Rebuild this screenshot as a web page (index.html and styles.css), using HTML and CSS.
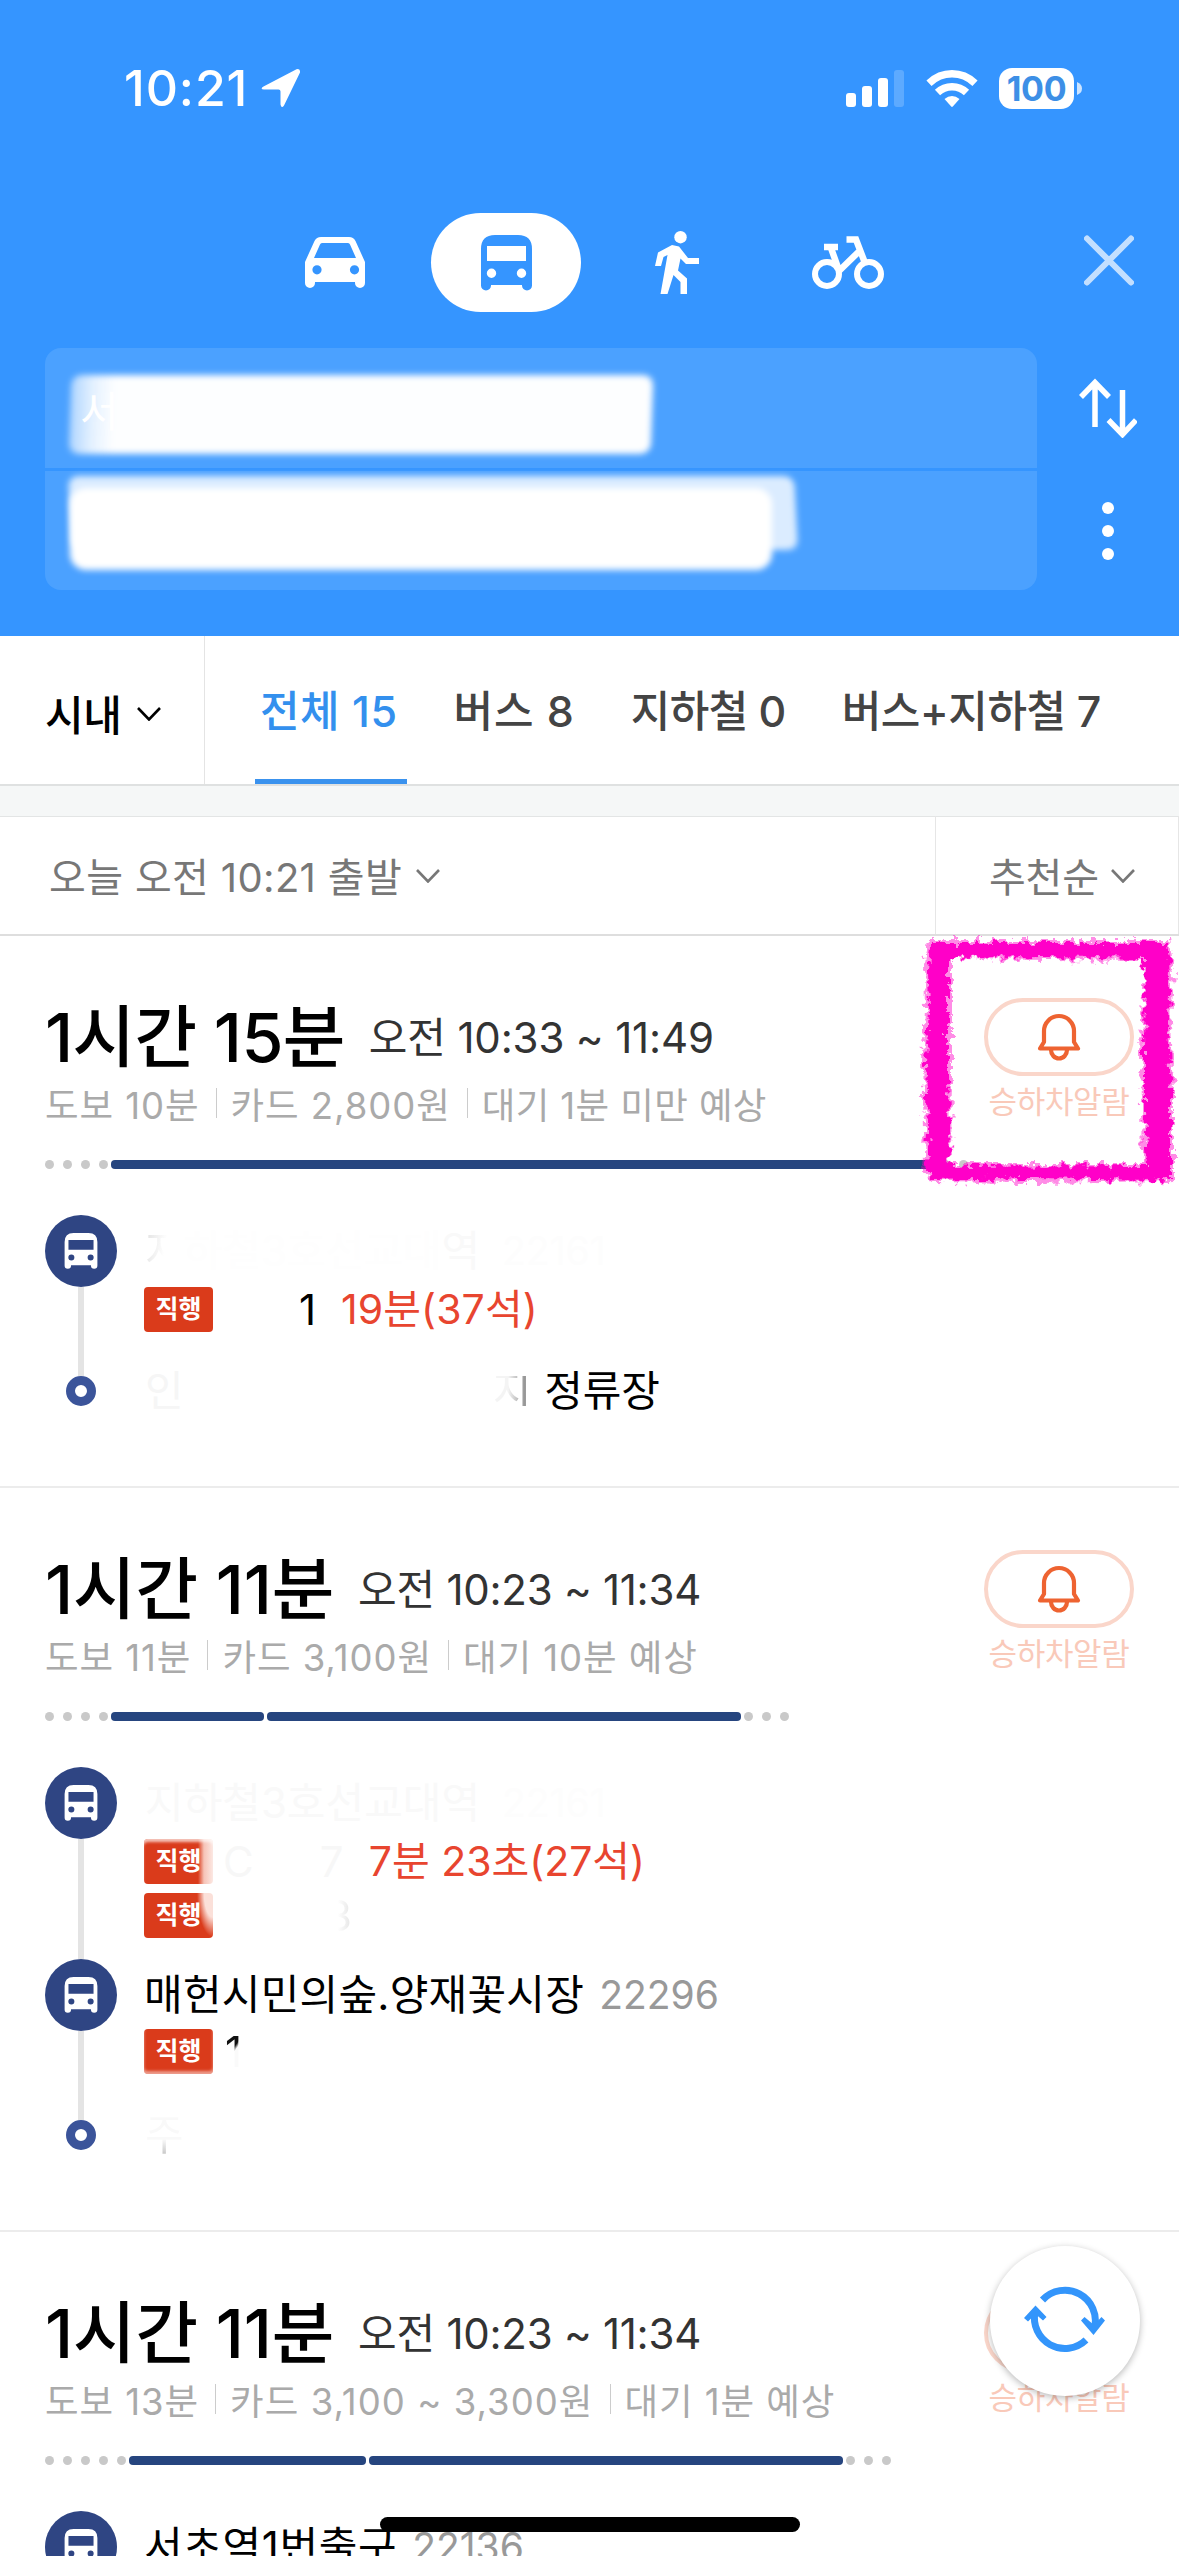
FILE: index.html
```
<!DOCTYPE html>
<html lang="ko">
<head>
<meta charset="utf-8">
<title>길찾기</title>
<link rel="stylesheet" href="styles.css">
</head>
<body>
<svg class="defs" width="0" height="0" aria-hidden="true">
  <symbol id="bus" viewBox="0 0 51 56">
    <path fill="currentColor" fill-rule="evenodd" d="M0 50V14Q0 0 14 0H37Q51 0 51 14V50.500a5 5 0 0 1-10 0V50H10v.500a5 5 0 0 1-10 0zM6 11V26H45V11zM10.500 33.500a4.700 4.700 0 1 0 0 9.400a4.700 4.700 0 1 0 0-9.400zM40.500 33.500a4.700 4.700 0 1 0 0 9.400a4.700 4.700 0 1 0 0-9.400z"/>
  </symbol>
  <symbol id="bell" viewBox="0 0 44 49">
    <path fill="none" stroke="currentColor" stroke-width="4.200" stroke-linejoin="round" stroke-linecap="round" d="M7 29V18a15 15 0 0 1 30 0V29L41 35.500H3ZM14 37a8 8.500 0 0 0 16 0"/>
  </symbol>
  <symbol id="chev" viewBox="0 0 24 14">
    <path fill="none" stroke="currentColor" stroke-width="2.600" d="M1 1L12 12.500L23 1"/>
  </symbol>
</svg>

<header class="header">
  <div class="status">
    <span class="clock">10:21</span>
    <svg class="loc" width="40" height="40" viewBox="0 0 40 40"><path fill="#fff" d="M2.500 18.500L35.500 1.200Q39.500 0 39 4.500L23 37.500Q20.500 41 19.500 36.500V23.500Q19.500 21.500 17.500 21.500H3Q-1.500 21 2.500 18.500z"/></svg>
    <svg class="signal" width="58" height="38" viewBox="0 0 58 38"><g fill="#fff"><rect y="23" width="10" height="14" rx="3"/><rect x="16" y="16" width="10" height="21" rx="3"/><rect x="32" y="8" width="10" height="29" rx="3"/><rect x="48" y="0" width="10" height="37" rx="3" opacity=".2"/></g></svg>
    <svg class="wifi" width="52" height="38" viewBox="0 0 52 38"><g fill="none" stroke="#fff" stroke-width="7.500"><path d="M3 13.200Q13 3.800 26 3.800T49 13.200"/><path d="M11.500 22.500Q17.500 16.700 26 16.700T40.500 22.500"/></g><path fill="#fff" d="M18.500 29Q22 26 26 26T33.500 29L26.800 36.600Q26 37.300 25.200 36.600z"/></svg>
    <span class="battery">100</span>
    <svg class="nub" width="5" height="13" viewBox="0 0 5 13"><path fill="#fff" opacity=".75" d="M0 0Q5 2 5 6.500T0 13z"/></svg>
  </div>

  <nav class="modes">
    <span class="mode"><svg width="60" height="51" viewBox="0 0 60 51"><path fill="#fff" fill-rule="evenodd" d="M0 46V25L9.500 4Q11.500 0 16 0H44Q48.500 0 50.500 4L60 25V46a5 5 0 0 1-10 0V45H10v1a5 5 0 0 1-10 0zM9 21H51L45 7.500Q44.500 6 43 6H17Q15.500 6 15 7.500zM12 28.200a4.600 4.600 0 1 0 0 9.200a4.600 4.600 0 1 0 0-9.200zM49.500 28.200a4.600 4.600 0 1 0 0 9.200a4.600 4.600 0 1 0 0-9.200z"/></svg></span>
    <span class="mode mode-on"><svg width="51" height="56"><use href="#bus"/></svg></span>
    <span class="mode"><svg width="44" height="64" viewBox="0 0 44 64"><circle cx="25.500" cy="6.200" r="6.200" fill="#fff"/><path fill="#fff" d="M17 14L24 15.500L33 27H44V33H31L25.500 27.500L23 39.500L32 47.500V63H25.500V51L18.500 44L12.500 63H5.500L12.500 24L8.500 26L6 35H0L3 21.500z"/></svg></span>
    <span class="mode"><svg width="72" height="54" viewBox="0 0 72 54"><g fill="none" stroke="#fff"><circle cx="15" cy="38" r="12" stroke-width="6"/><circle cx="57" cy="38" r="12" stroke-width="6"/><path stroke-width="6.500" d="M12 11H26M19 12L26.500 33M34.500 3.500H44L53 27M27 35L48.500 14"/></g></svg></span>
    <svg class="close" width="50" height="51" viewBox="0 0 50 51"><path stroke="#fff" stroke-width="6" stroke-linecap="round" opacity=".7" d="M3 3.500L47 47.500M47 3.500L3 47.500"/></svg>
  </nav>

  <div class="route">
    <div class="fields">
      <div class="field"><span class="smear smear-a"></span><span class="origin">서</span></div>
      <div class="field"><span class="smear smear-b"></span><span class="smear smear-c"></span></div>
    </div>
    <div class="side">
      <svg width="58" height="60" viewBox="0 0 58 60"><path fill="none" stroke="#fff" stroke-width="5.500" d="M16 49V4M2 19L16 4.500L30 19M43.500 12V57M29.500 42L43.500 56.500L57 42"/></svg>
      <span class="dots"><i></i><i></i><i></i></span>
    </div>
  </div>
</header>

<div class="tabs">
  <div class="scope"><span>시내</span><svg width="24" height="14"><use href="#chev"/></svg></div>
  <nav class="tablist">
    <span class="tab tab-on">전체 15</span><span class="tab tab-bus">버스 8</span><span class="tab tab-sub">지하철 0</span><span class="tab tab-mix">버스+지하철 7</span>
  </nav>
</div>

<div class="filter">
  <div class="depart"><span>오늘 오전 10:21 출발</span><svg width="24" height="14"><use href="#chev"/></svg></div>
  <div class="sort"><span>추천순</span><svg width="24" height="14"><use href="#chev"/></svg></div>
</div>

<main>
  <article class="card">
    <div class="top">
      <div class="summary">
        <div class="line1"><h2>1시간 15분</h2><span class="time time-a">오전 10:33 ~ 11:49</span></div>
        <div class="meta"><span>도보 10분</span><span>카드 2,800원</span><span class="wait-a">대기 1분 미만 예상</span></div>
      </div>
      <div class="alarm"><span class="pill"><svg width="44" height="49"><use href="#bell"/></svg></span><span class="alabel">승하차알람</span></div>
    </div>
    <div class="bar"><i></i><i></i><i></i><i></i><b style="width:827px"></b><i></i><i></i></div>
    <div class="stops">
      <div class="stop">
        <div class="rail"><span class="busdot"><svg width="34" height="36"><use href="#bus"/></svg></span><span class="track"></span></div>
        <div class="info">
          <div class="name ghost"><span class="ghost-ji">지</span><span class="ghost-x">하철3호선교대</span><span class="ghost-y">역</span><span class="ghost-x code">22161</span></div>
          <div class="busrow"><span class="badge">직행</span><span class="num">1</span><span class="eta">19분(37석)</span></div>
        </div>
      </div>
      <div class="stop">
        <div class="rail"><span class="enddot"></span></div>
        <div class="info"><div class="name end"><span class="ghost-in">인</span><span class="ghost-end">지</span><span class="place">정류장</span></div></div>
      </div>
    </div>
  </article>

  <article class="card">
    <div class="top">
      <div class="summary">
        <div class="line1"><h2 class="dur-b">1시간 11분</h2><span class="time">오전 10:23 ~ 11:34</span></div>
        <div class="meta"><span>도보 11분</span><span>카드 3,100원</span><span>대기 10분 예상</span></div>
      </div>
      <div class="alarm"><span class="pill"><svg width="44" height="49"><use href="#bell"/></svg></span><span class="alabel">승하차알람</span></div>
    </div>
    <div class="bar"><i></i><i></i><i></i><i></i><b style="width:153px"></b><b style="width:474px"></b><i></i><i></i><i></i></div>
    <div class="stops">
      <div class="stop">
        <div class="rail"><span class="busdot"><svg width="34" height="36"><use href="#bus"/></svg></span><span class="track"></span></div>
        <div class="info info-two">
          <div class="name ghost"><span class="ghost-y">지하철3호선교대역</span><span class="ghost-x code">22161</span></div>
          <div class="busrow"><span class="badge fade-tr">직행</span><span class="ghost-g">C</span><span class="ghost-7">7</span><span class="eta eta-b">7분 23초(27석)</span></div>
          <div class="busrow"><span class="badge fade-r">직행</span><span class="ghost-8">3</span></div>
        </div>
      </div>
      <div class="stop">
        <div class="rail"><span class="busdot"><svg width="34" height="36"><use href="#bus"/></svg></span><span class="track"></span></div>
        <div class="info">
          <div class="name"><span class="place-b">매헌시민의숲.양재꽃시장</span><span class="code">22296</span></div>
          <div class="busrow busrow-up"><span class="badge fade-b">직행</span><span class="ghost-1">1</span></div>
        </div>
      </div>
      <div class="stop">
        <div class="rail"><span class="enddot"></span></div>
        <div class="info"><div class="name end"><span class="ghost-ju">주</span></div></div>
      </div>
    </div>
  </article>

  <article class="card">
    <div class="top">
      <div class="summary">
        <div class="line1"><h2 class="dur-b">1시간 11분</h2><span class="time">오전 10:23 ~ 11:34</span></div>
        <div class="meta"><span>도보 13분</span><span class="fare">카드 3,100 ~ 3,300원</span><span>대기 1분 예상</span></div>
      </div>
      <div class="alarm"><span class="pill"><svg width="44" height="49"><use href="#bell"/></svg></span><span class="alabel">승하차알람</span></div>
    </div>
    <div class="bar"><i></i><i></i><i></i><i></i><i></i><b style="width:237px"></b><b style="width:474px"></b><i></i><i></i><i></i></div>
    <div class="stops">
      <div class="stop">
        <div class="rail"><span class="busdot"><svg width="34" height="36"><use href="#bus"/></svg></span></div>
        <div class="info"><div class="name"><span class="place-c">서초역1번출구</span><span class="code">22136</span></div></div>
      </div>
    </div>
  </article>
</main>

<svg class="marker" width="270" height="260" viewBox="0 0 270 260">
  <filter id="rough" x="-5%" y="-5%" width="110%" height="110%"><feTurbulence type="fractalNoise" baseFrequency=".13" numOctaves="3" seed="7"/><feDisplacementMap in="SourceGraphic" scale="15" xChannelSelector="R" yChannelSelector="G"/><feGaussianBlur stdDeviation=".7"/></filter>
  <g filter="url(#rough)" fill="#ff00c8" fill-rule="evenodd">
    <path opacity=".45" d="M13 9H255L260 40L257 90L260 160V250L120 252L20 251L8 242L10 200L8 130L11 80L10 30zM38 28V142L37 232H229L227 120L230 30z"/>
    <path d="M16 12H253L256 40L254 90L257 160V247L240 249L120 247L20 249L12 240L14 200L12 130L15 80L14 40zM34 27V142L36 235L233 234L230 180V120L231 28L130 26z"/>
  </g>
</svg>

<button class="refresh" aria-label="새로고침"><svg width="82" height="72" viewBox="0 0 82 72"><g fill="none" stroke="#3395fb" stroke-width="7"><path d="M18.500 15A30.500 30.500 0 0 1 70.500 43"/><path d="M62 55A30.500 30.500 0 0 1 11 27"/></g><path fill="#3395fb" d="M0 33L11.500 20.500L22.500 32L19 35.500L11.500 29L4 36.500zM57 35.500L60.500 32L70 40L77.500 32L81 35.500L69.500 50z"/></svg></button>
<div class="home"></div>
</body>
</html>
```
FILE: styles.css
```
* { box-sizing: border-box; margin: 0; padding: 0; }
html, body { width: 1179px; height: 2556px; overflow: hidden; }
body { position: relative; display: flex; flex-direction: column; background: #fff; color: #000; font-family: Inter, "Noto Sans CJK KR", sans-serif; font-size: 42px; font-weight: 400; white-space: nowrap; }
svg { display: block; flex: none; }
i { font-style: normal; }
main { flex: 1; min-height: 0; overflow: hidden; }
.defs { position: absolute; }

.header { flex: none; height: 636px; padding-top: 67px; background: #3595ff; }
.status { display: flex; align-items: center; height: 42px; padding-left: 124px; color: #fff; }
.clock { width: 137px; font-size: 50px; font-weight: 500; line-height: 42px; letter-spacing: .9px; }
.signal { margin: 2px 22px 0 545px; }
.wifi { margin-top: 2px; }
.battery { width: 75px; height: 41px; margin-left: 21px; border-radius: 13px; background: #fff; color: #3d8fe6; font-size: 34px; font-weight: 700; line-height: 41px; text-align: center; letter-spacing: -.3px; }
.nub { margin-left: 3px; }

.modes { display: flex; align-items: center; height: 99px; margin-top: 104px; padding: 0 45px 0 260px; gap: 21px; }
.mode { display: flex; align-items: center; justify-content: center; width: 150px; height: 99px; }
.mode-on { border-radius: 50px; background: #fff; color: #3595ff; }
.close { margin: -4px 0 0 auto; }

.route { display: flex; height: 242px; margin-top: 36px; padding-left: 45px; }
.fields { display: flex; flex-direction: column; gap: 3px; width: 993px; border-radius: 16px; overflow: hidden; }
.field { display: grid; flex: 1; align-items: start; justify-items: start; padding-left: 25px; background: #4ba1ff; }
.smear { grid-area: 1 / 1; background: #fff; filter: blur(3px); border-radius: 10px; }
.smear-a { width: 582px; height: 79px; margin-top: 27px; transform: skewX(-2deg); background: linear-gradient(to right, rgba(255,255,255,.55), rgba(255,255,255,.85) 22px, #fdfeff 44px); }
.origin { grid-area: 1 / 1; margin: 24px 0 0 10px; color: #fff; line-height: 79px; z-index: 1; }
.smear-b { width: 726px; height: 74px; margin-top: 5px; background: rgba(255,255,255,.8); transform: skewX(3deg); }
.smear-c { width: 702px; height: 82px; margin-top: 17px; border-radius: 16px; }
.side { display: flex; flex-direction: column; align-items: center; width: 142px; padding-top: 30px; }
.dots { display: flex; flex-direction: column; gap: 11px; margin-top: 64px; }
.dots i { width: 12px; height: 12px; border-radius: 50%; background: #fff; }

.tabs { display: flex; flex: none; height: 150px; border-bottom: 2px solid #dfe1e1; }
.scope { display: flex; align-items: center; width: 205px; padding: 4px 0 0 45px; border-right: 1px solid #e4e4e4; font-weight: 500; letter-spacing: -.5px; }
.scope svg { margin: 3px 0 0 16px; }
.tablist { display: flex; gap: 56px; padding-left: 55px; }
.tab { position: relative; color: #444; font-size: 43px; font-weight: 500; line-height: 150px; }
.tab-on { color: #3390ee; letter-spacing: .5px; }
.tab-on::after { content: ""; position: absolute; left: -5px; right: -9px; bottom: 0; height: 5px; background: #3a92ee; }
.tab-bus { letter-spacing: .9px; }
.tab-sub { letter-spacing: -.6px; }
.tab-mix { letter-spacing: -.4px; }

.filter { display: flex; flex: none; justify-content: space-between; height: 150px; border-top: 30px solid #f5f7f7; border-bottom: 2px solid #dedede; color: #777; font-size: 40px; box-shadow: inset 0 1px #e3e5e5; }
.depart, .sort { display: flex; align-items: center; }
.depart { padding-left: 49px; letter-spacing: .35px; }
.depart svg { margin: 2px 0 0 14px; }
.sort { width: 244px; padding-left: 53px; border: 1px solid #e6e6e6; border-width: 0 1px; letter-spacing: -.2px; }
.sort svg { margin: 2px 0 0 12px; }

.card { padding: 62px 45px 80px; border-bottom: 2px solid #ececec; }
.top { display: flex; justify-content: space-between; height: 133px; }
.line1 { display: flex; align-items: center; height: 80px; }
h2 { font-size: 68px; font-weight: 500; line-height: 80px; letter-spacing: -.65px; margin-top: -2px; }
.dur-b { margin-right: -4px; letter-spacing: -.2px; }
.time { margin: -8px 0 0 28px; color: #333; letter-spacing: -.26px; }
.time-a { margin-left: 24px; letter-spacing: -.15px; }
.meta { display: flex; align-items: center; height: 50px; margin-top: 0; color: #aaa; font-size: 36.500px; letter-spacing: .95px; }
.meta span + span { display: flex; align-items: center; }
.meta span + span::before { content: ""; width: 1px; height: 30px; margin: 0 14px 0 16px; background: #ccc; }
.meta .wait-a { letter-spacing: .4px; }
.meta .fare { letter-spacing: 1.05px; }
.alarm { display: flex; flex-direction: column; align-items: center; width: 150px; }
.pill { display: flex; align-items: center; justify-content: center; width: 150px; height: 78px; border: 4px solid #fad6ca; border-radius: 39px; color: #ee6331; }
.alabel { margin-top: 6px; color: #f9c9b9; font-size: 31px; line-height: 40px; letter-spacing: -.3px; }

.bar { display: flex; align-items: center; gap: 3px; height: 9px; margin-top: 29px; }
.bar i { width: 9px; height: 9px; border-radius: 50%; background: #c9c9c9; }
.bar i + i { margin-left: 6px; }
.bar b { height: 9px; border-radius: 4px; background: #26457f; }

.stops { margin-top: 46px; }
.stop { display: flex; gap: 28px; }
.rail { display: flex; flex-direction: column; align-items: center; width: 72px; }
.busdot { display: flex; align-items: center; justify-content: center; flex: none; width: 72px; height: 72px; border-radius: 50%; background: #2f4583; color: #fff; }
.track { flex: 1; width: 6px; background: #e4e4e4; }
.enddot { width: 30px; height: 30px; border: 9px solid #3b549a; border-radius: 50%; background: #fff; }
.info { min-height: 161px; }
.info-two { min-height: 192px; }
.name { display: flex; align-items: center; height: 72px; line-height: 72px; }
.end { height: 30px; line-height: 30px; }
.rail:has(.enddot) + .info { min-height: 30px; }
.place { margin-left: 13px; letter-spacing: -.2px; }
.place-b { margin-left: -1px; letter-spacing: .25px; }
.place-c { margin-left: -1px; letter-spacing: .6px; }
.code { margin-left: 15px; color: #999; font-size: 39px; }
.busrow { display: flex; align-items: center; height: 45px; line-height: 45px; }
.busrow + .busrow { margin-top: 9px; }
.busrow-up { margin-top: -2px; }
.badge { flex: none; width: 69px; height: 45px; margin-left: -1px; border-radius: 4px; background: #da3b1b; color: #fff; font-size: 25px; font-weight: 700; text-align: center; }
.num { width: 17px; margin-left: 86px; }
.eta { margin-left: 25px; color: #e8452f; font-size: 41px; letter-spacing: .1px; }
.eta-b { margin-left: 23px; letter-spacing: 0; }

.fade-tr { background: linear-gradient(to right, #da3b1b 54px, #f6c3b7 60px, #fbe4de 68px); box-shadow: inset 0 4px 3px -1px rgba(255,255,255,.7); }
.fade-r { background: radial-gradient(ellipse 16px 44px at 100% 0, #fbe0d9 55%, #da3b1b); }
.fade-b { box-shadow: inset 0 -3px 3px rgba(255,255,255,.5); }
.ghost-ji, .ghost-end, .ghost-1, .ghost-ju, .ghost-8 { color: transparent; background-clip: text; -webkit-background-clip: text; }
.ghost-ji { background-image: linear-gradient(100deg, #ddd, #fff 50%); }
.ghost-x { color: #fefefe; }
.ghost-y { color: #f9f9f9; }
.code.ghost-x { margin-left: 22px; color: #fdfdfd; }
.ghost-in { color: #f6f6f6; }
.ghost-end { margin-left: 309px; background-image: linear-gradient(to right, #f4f4f4 40%, #888 90%); }
.ghost-g { margin-left: 10px; color: #f7f7f7; }
.ghost-7 { width: 26px; margin-left: 66px; color: #f7f7f7; }
.ghost-8 { margin-left: 113px; background-image: linear-gradient(to right, #fff 45%, #e4e4e4); }
.ghost-1 { width: 20px; margin-left: 12px; background-image: linear-gradient(125deg, #111 42%, #fafafa 49%); }
.ghost-ju { background-image: linear-gradient(to bottom, #f9f9f9 60%, #bbb); line-height: 46px; }

.marker { position: absolute; left: 914px; top: 931px; }
.refresh { position: absolute; left: 990px; top: 2246px; display: flex; align-items: center; justify-content: center; width: 150px; height: 150px; border: 0; border-radius: 50%; background: #fff; box-shadow: 0 2px 7px rgba(0,0,0,.28); }
.home { position: absolute; left: 380px; top: 2517px; width: 420px; height: 15px; border-radius: 8px; background: #000; }
```
